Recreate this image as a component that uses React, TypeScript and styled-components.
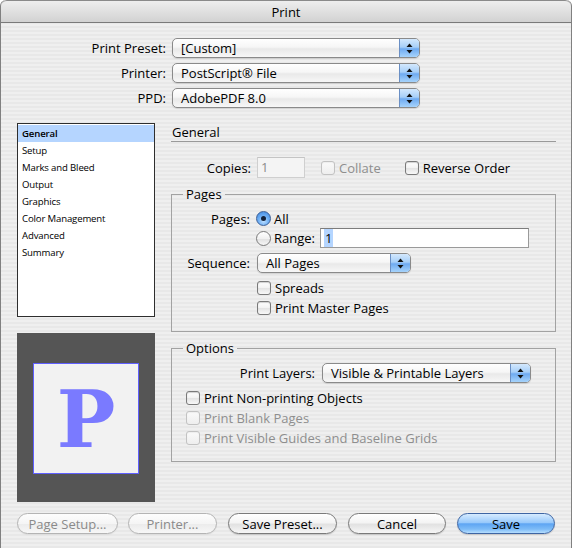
import React from 'react';
import styled, { createGlobalStyle, css } from 'styled-components';

const stripes = css`
  background-color: #ececec;
  background-image: repeating-linear-gradient(
    to bottom,
    #efefef 0px,
    #efefef 2px,
    #e8e8e8 2px,
    #e8e8e8 4px
  );
  background-attachment: fixed;
`;

const Global = createGlobalStyle`
  html, body { margin: 0; padding: 0; }
  body {
    font-family: "Open Sans", "DejaVu Sans", sans-serif;
    font-size: 13px;
    color: #000;
    background: #fff;
  }
  * { box-sizing: border-box; }
`;

const Window = styled.div`
  width: 572px;
  height: 548px;
  border-left: 1px solid #808080;
  border-right: 1px solid #808080;
  border-radius: 6px 6px 0 0;
  overflow: hidden;
  display: flex;
  flex-direction: column;
  ${stripes}
`;

const TitleBar = styled.div`
  height: 23px;
  border-top: 1px solid #8a8a8a;
  border-bottom: 1px solid #7a7a7a;
  background: linear-gradient(#eeeeee, #d2d2d2);
  display: flex;
  align-items: center;
  justify-content: center;
  font-size: 13px;
  line-height: 16px;
  border-radius: 6px 6px 0 0;
`;

const Body = styled.div`
  flex: 1;
  display: flex;
  flex-direction: column;
  padding-top: 15px;
`;

const TopForm = styled.div`
  display: grid;
  grid-template-columns: 165px 248px;
  column-gap: 6px;
  row-gap: 5px;
  align-items: center;
`;

const FormLabel = styled.div`
  text-align: right;
  line-height: 16px;
  white-space: nowrap;
`;

const PopupBox = styled.div<{ $w: number }>`
  width: ${p => p.$w}px;
  height: 20px;
  display: flex;
  align-items: stretch;
  border: 1px solid #8a8a8a;
  border-radius: 5px;
  background: linear-gradient(#ffffff 0%, #f6f6f6 45%, #e9e9e9 55%, #f7f7f7 100%);
  box-shadow: 0 1px 1px rgba(0, 0, 0, 0.12);
  overflow: hidden;
`;

const PopupText = styled.div`
  flex: 1;
  padding-left: 8px;
  line-height: 18px;
  white-space: nowrap;
  overflow: hidden;
`;

const PopupArrow = styled.div`
  width: 20px;
  border-left: 1px solid #6a8fc4;
  background: linear-gradient(#d3e8fd 0%, #a7cff8 45%, #6eaaf1 55%, #a6d3fb 100%);
  display: flex;
  align-items: center;
  justify-content: center;
`;

const Popup: React.FC<{ w: number; children: React.ReactNode }> = ({ w, children }) => (
  <PopupBox $w={w}>
    <PopupText>{children}</PopupText>
    <PopupArrow>
      <svg width="7" height="11" viewBox="0 0 7 11">
        <polygon points="3.5,0.5 6.5,4 0.5,4" fill="#111" />
        <polygon points="0.5,7 6.5,7 3.5,10.5" fill="#111" />
      </svg>
    </PopupArrow>
  </PopupBox>
);

const Main = styled.div`
  display: flex;
  gap: 16px;
  margin-top: 15px;
  padding-left: 16px;
`;

const LeftCol = styled.div`
  width: 138px;
  display: flex;
  flex-direction: column;
  gap: 16px;
`;

const ListBox = styled.div`
  height: 194px;
  border: 1px solid #2e2e2e;
  background: #fff;
  padding-top: 1px;
`;

const ListItem = styled.div<{ $selected?: boolean }>`
  height: 17px;
  line-height: 17px;
  padding-left: 4px;
  font-size: 9.6px;
  letter-spacing: -0.15px;
  white-space: nowrap;
  background: ${p => (p.$selected ? '#b5d5ff' : 'transparent')};
  font-weight: ${p => (p.$selected ? 600 : 400)};
`;

const Preview = styled.div`
  height: 169px;
  background: #555555;
  padding: 30px 0 0 16px;
`;

const PreviewPage = styled.div`
  width: 106px;
  height: 111px;
  border: 1px solid #5f5fff;
  background: #f2f2f2;
  display: flex;
  align-items: center;
  justify-content: center;
`;

const PreviewGlyph = styled.span`
  font-family: "DejaVu Serif", serif;
  font-weight: 600;
  font-size: 78px;
  line-height: 1;
  color: #7a7aff;
  margin-top: 2px;
`;

const RightCol = styled.div`
  width: 385px;
  display: flex;
  flex-direction: column;
`;

const Heading = styled.div`
  height: 19px;
  line-height: 18px;
  padding-left: 1px;
  border-bottom: 1px solid #9a9a9a;
`;

const Row = styled.div<{ $h: number; $mt?: number; $pl?: number }>`
  display: flex;
  align-items: center;
  height: ${p => p.$h}px;
  margin-top: ${p => p.$mt ?? 0}px;
  padding-left: ${p => p.$pl ?? 0}px;
  white-space: nowrap;
`;

const RowLabel = styled.div<{ $w: number; $gap?: number }>`
  width: ${p => p.$w}px;
  margin-right: ${p => p.$gap ?? 6}px;
  text-align: right;
  line-height: 16px;
`;

const TextField = styled.div<{ $w: number; $h: number; $disabled?: boolean }>`
  width: ${p => p.$w}px;
  height: ${p => p.$h}px;
  border: 1px solid ${p => (p.$disabled ? '#cfcfcf' : '#9a9a9a')};
  border-top-color: ${p => (p.$disabled ? '#c4c4c4' : '#7c7c7c')};
  background: ${p => (p.$disabled ? '#f4f4f4' : '#fff')};
  color: ${p => (p.$disabled ? '#8c8c8c' : '#000')};
  padding-left: 3px;
  line-height: ${p => p.$h - 2}px;
`;

const Selected = styled.span`
  background: #b5d5ff;
  padding: 0 1px;
`;

const CheckBox = styled.span<{ $disabled?: boolean }>`
  width: 14px;
  height: 14px;
  flex: none;
  border-radius: 3px;
  border: 1px solid ${p => (p.$disabled ? '#c2c2c2' : '#7a7a7a')};
  background: ${p =>
    p.$disabled
      ? 'linear-gradient(#fafafa, #eeeeee)'
      : 'linear-gradient(#ffffff 0%, #f2f2f2 50%, #e3e3e3 51%, #f8f8f8 100%)'};
  box-shadow: inset 0 1px 1px rgba(0, 0, 0, ${p => (p.$disabled ? 0.05 : 0.18)});
  margin-right: 4px;
`;

const CheckText = styled.span<{ $disabled?: boolean }>`
  color: ${p => (p.$disabled ? '#8e8e8e' : '#000')};
  line-height: 16px;
`;

const Check = styled.label<{ $ml?: number }>`
  display: inline-flex;
  align-items: center;
  margin-left: ${p => p.$ml ?? 0}px;
`;

const Radio = styled.span<{ $on?: boolean }>`
  width: 15px;
  height: 15px;
  flex: none;
  border-radius: 50%;
  border: 1px solid ${p => (p.$on ? '#3b5f97' : '#7a7a7a')};
  background: ${p =>
    p.$on
      ? 'radial-gradient(circle at 50% 70%, #bfe0ff 0%, #6fb0f5 45%, #3a82dc 100%)'
      : 'linear-gradient(#ffffff 0%, #f1f1f1 50%, #e0e0e0 51%, #f7f7f7 100%)'};
  display: inline-flex;
  align-items: center;
  justify-content: center;
  margin-right: 3px;
`;

const RadioDot = styled.span`
  width: 5px;
  height: 5px;
  border-radius: 50%;
  background: #13213a;
`;

const Group = styled.div<{ $mt: number }>`
  position: relative;
  border: 1px solid #a2a2a2;
  margin-top: ${p => p.$mt}px;
  padding: 14px 0 13px 0;
  display: flex;
  flex-direction: column;
`;

const Legend = styled.div`
  position: absolute;
  top: -9px;
  left: 11px;
  padding: 0 3px;
  line-height: 16px;
  ${stripes}
`;

const ButtonRow = styled.div`
  display: flex;
  margin-top: 11px;
  padding-left: 16px;
`;

const Button = styled.div<{ $w: number; $ml?: number; $variant?: 'disabled' | 'primary' | 'normal' }>`
  width: ${p => p.$w}px;
  height: 21px;
  margin-left: ${p => p.$ml ?? 0}px;
  border-radius: 11px;
  display: flex;
  align-items: center;
  justify-content: center;
  line-height: 16px;
  white-space: nowrap;
  border: 1px solid
    ${p => (p.$variant === 'disabled' ? '#b4b4b4' : p.$variant === 'primary' ? '#3e65a3' : '#7a7a7a')};
  color: ${p => (p.$variant === 'disabled' ? '#8a8a8a' : '#000')};
  background: ${p =>
    p.$variant === 'primary'
      ? 'linear-gradient(#d6ebff 0%, #98c9fb 45%, #5ea5f3 52%, #7ebcf7 80%, #b6defe 100%)'
      : p.$variant === 'disabled'
      ? 'linear-gradient(#fdfdfd 0%, #f5f5f5 50%, #ebebeb 51%, #f7f7f7 100%)'
      : 'linear-gradient(#ffffff 0%, #f4f4f4 45%, #e2e2e2 55%, #f6f6f6 100%)'};
  box-shadow: 0 1px 1px rgba(0, 0, 0, ${p => (p.$variant === 'disabled' ? 0.05 : 0.15)});
`;

const listItems = [
  'General',
  'Setup',
  'Marks and Bleed',
  'Output',
  'Graphics',
  'Color Management',
  'Advanced',
  'Summary',
];

export default function App() {
  return (
    <>
      <Global />
      <Window>
        <TitleBar>Print</TitleBar>
        <Body>
          <TopForm>
            <FormLabel>Print Preset:</FormLabel>
            <Popup w={248}>[Custom]</Popup>
            <FormLabel>Printer:</FormLabel>
            <Popup w={248}>PostScript® File</Popup>
            <FormLabel>PPD:</FormLabel>
            <Popup w={248}>AdobePDF 8.0</Popup>
          </TopForm>

          <Main>
            <LeftCol>
              <ListBox>
                {listItems.map((it, i) => (
                  <ListItem key={it} $selected={i === 0}>
                    {it}
                  </ListItem>
                ))}
              </ListBox>
              <Preview>
                <PreviewPage>
                  <PreviewGlyph>P</PreviewGlyph>
                </PreviewPage>
              </Preview>
            </LeftCol>

            <RightCol>
              <Heading>General</Heading>
              <Row $h={21} $mt={15}>
                <RowLabel $w={80}>Copies:</RowLabel>
                <TextField $w={48} $h={21} $disabled>
                  1
                </TextField>
                <Check $ml={16}>
                  <CheckBox $disabled />
                  <CheckText $disabled>Collate</CheckText>
                </Check>
                <Check $ml={24}>
                  <CheckBox />
                  <CheckText>Reverse Order</CheckText>
                </Check>
              </Row>

              <Group $mt={16}>
                <Legend>Pages</Legend>
                <Row $h={19}>
                  <RowLabel $w={78} $gap={6}>Pages:</RowLabel>
                  <Radio $on>
                    <RadioDot />
                  </Radio>
                  <CheckText>All</CheckText>
                </Row>
                <Row $h={20} $pl={84}>
                  <Radio />
                  <CheckText>Range:</CheckText>
                  <TextField $w={209} $h={20} style={{ marginLeft: 5 }}>
                    <Selected>1</Selected>
                  </TextField>
                </Row>
                <Row $h={20} $mt={5}>
                  <RowLabel $w={78} $gap={7}>Sequence:</RowLabel>
                  <Popup w={154}>All Pages</Popup>
                </Row>
                <Row $h={20} $mt={5} $pl={85}>
                  <Check>
                    <CheckBox />
                    <CheckText>Spreads</CheckText>
                  </Check>
                </Row>
                <Row $h={20} $pl={85}>
                  <Check>
                    <CheckBox />
                    <CheckText>Print Master Pages</CheckText>
                  </Check>
                </Row>
              </Group>

              <Group $mt={16}>
                <Legend>Options</Legend>
                <Row $h={20}>
                  <RowLabel $w={143} $gap={7}>Print Layers:</RowLabel>
                  <Popup w={209}>Visible &amp; Printable Layers</Popup>
                </Row>
                <Row $h={20} $mt={5} $pl={14}>
                  <Check>
                    <CheckBox />
                    <CheckText>Print Non-printing Objects</CheckText>
                  </Check>
                </Row>
                <Row $h={20} $pl={14}>
                  <Check>
                    <CheckBox $disabled />
                    <CheckText $disabled>Print Blank Pages</CheckText>
                  </Check>
                </Row>
                <Row $h={20} $pl={14}>
                  <Check>
                    <CheckBox $disabled />
                    <CheckText $disabled>Print Visible Guides and Baseline Grids</CheckText>
                  </Check>
                </Row>
              </Group>
            </RightCol>
          </Main>

          <ButtonRow>
            <Button $w={101} $variant="disabled">Page Setup...</Button>
            <Button $w={89} $ml={10} $variant="disabled">Printer...</Button>
            <Button $w={109} $ml={11}>Save Preset...</Button>
            <Button $w={98} $ml={11}>Cancel</Button>
            <Button $w={98} $ml={11} $variant="primary">Save</Button>
          </ButtonRow>
        </Body>
      </Window>
    </>
  );
}
